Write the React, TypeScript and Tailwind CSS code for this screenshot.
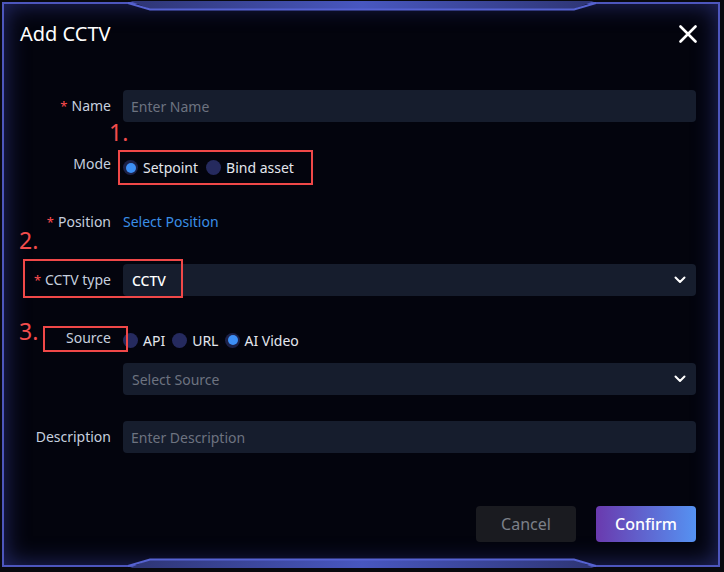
import React from 'react';

const Radio = ({ checked }: { checked?: boolean }) =>
  checked ? (
    <span className="w-[15px] h-[15px] rounded-full bg-[#1c2148] flex items-center justify-center shrink-0">
      <span className="w-[10px] h-[10px] rounded-full bg-[#3d8ff5]" />
    </span>
  ) : (
    <span className="w-[15px] h-[15px] rounded-full bg-[#252a5e] shrink-0" />
  );

const Label = ({ text, req, extra = '' }: { text: string; req?: boolean; extra?: string }) => (
  <div className={`w-[91px] mr-[12px] shrink-0 flex justify-end text-[14px] leading-5 text-[#c6cfdf] ${extra}`}>
    {req && <span className="text-[#ff4d4f] text-[13px] mr-[4px]">*</span>}
    <span>{text}</span>
  </div>
);

const Chevron = () => (
  <svg width="12" height="8" viewBox="0 0 12 8" className="shrink-0">
    <polyline points="1.5,1.5 6,6 10.5,1.5" fill="none" stroke="#ffffff" strokeWidth="2" strokeLinecap="round" strokeLinejoin="round" />
  </svg>
);

export default function App() {
  return (
    <div className="relative w-[724px] h-[572px] overflow-hidden bg-[#08090e] font-['Noto_Sans',sans-serif] pt-[2px] pl-[2px]">
      <div className="relative w-[718px] h-[565px] border-2 border-[#4d56bd] bg-[#03040d] shadow-[inset_0_0_24px_rgba(70,80,200,0.5)] pl-[16px] pr-[22px] pt-[16px] flex flex-col">
        {/* Title */}
        <div className="h-7 flex items-center justify-between">
          <span className="text-[20px] leading-7 text-white">Add CCTV</span>
          <svg width="18" height="18" viewBox="0 0 18 18" className="mr-[-1px]">
            <path d="M1.5 1.5 L16.5 16.5 M16.5 1.5 L1.5 16.5" stroke="#ffffff" strokeWidth="2.6" strokeLinecap="round" />
          </svg>
        </div>

        {/* Name */}
        <div className="mt-[42px] h-8 flex items-center">
          <Label text="Name" req />
          <div className="flex-1 h-8 rounded bg-[#161d2d] flex items-center pl-[8px] text-[14px] text-[#6d7380]">Enter Name</div>
        </div>

        {/* Mode */}
        <div className="mt-[28px] h-[35px] flex items-start">
          <Label text="Mode" extra="pt-[4px]" />
          <div className="ml-[-5px] w-[195px] h-[35px] border-2 border-[#f04848] flex items-center pl-[3px] text-[14px] text-[#e4e7ee]">
            <Radio checked />
            <span className="ml-[5px] mr-[8px]">Setpoint</span>
            <Radio />
            <span className="ml-[5px]">Bind asset</span>
          </div>
        </div>

        {/* Position */}
        <div className="mt-[21px] h-8 flex items-center">
          <Label text="Position" req />
          <span className="text-[14px] leading-5 text-[#3a8ee6]">Select Position</span>
        </div>

        {/* CCTV type */}
        <div className="mt-[26px] h-8 flex items-center">
          <Label text="CCTV type" req />
          <div className="flex-1 h-8 rounded bg-[#161d2d] flex items-center justify-between pl-[9px] pr-[10px] text-[14px] text-white font-medium">
            <span>CCTV</span>
            <Chevron />
          </div>
        </div>

        {/* Source */}
        <div className="mt-[28px] h-8 flex items-center">
          <Label text="Source" extra="pb-[5px]" />
          <div className="flex items-center text-[14px] text-[#e4e7ee]">
            <Radio />
            <span className="ml-[5px] mr-[7px]">API</span>
            <Radio />
            <span className="ml-[5px] mr-[7px]">URL</span>
            <Radio checked />
            <span className="ml-[4px]">AI Video</span>
          </div>
        </div>

        {/* Select Source */}
        <div className="mt-[7px] h-8 flex items-center pl-[103px]">
          <div className="flex-1 h-8 rounded bg-[#161d2d] flex items-center justify-between pl-[9px] pr-[10px] text-[14px] text-[#6d7380]">
            <span>Select Source</span>
            <Chevron />
          </div>
        </div>

        {/* Description */}
        <div className="mt-[26px] h-8 flex items-center">
          <Label text="Description" />
          <div className="flex-1 h-8 rounded bg-[#161d2d] flex items-center pl-[8px] text-[14px] text-[#6d7380]">Enter Description</div>
        </div>

        {/* Buttons */}
        <div className="mt-[53px] h-9 flex justify-end gap-5">
          <button className="w-[100px] h-9 rounded bg-[#1a1b20] text-[16px] text-[#7c8089]">Cancel</button>
          <button className="w-[100px] h-9 rounded bg-[linear-gradient(90deg,#6a3aae,#5592f2)] text-[16px] text-white font-medium">Confirm</button>
        </div>
      </div>

      {/* Frame tabs */}
      <svg className="absolute left-0 top-0 pointer-events-none" width="724" height="572" viewBox="0 0 724 572">
        <defs>
          <linearGradient id="tabg" x1="0" x2="1" y1="0" y2="0">
            <stop offset="0" stopColor="#2e3574" />
            <stop offset="0.5" stopColor="#4857c0" />
            <stop offset="1" stopColor="#2e3574" />
          </linearGradient>
        </defs>
        <polygon points="130,1 594,1 574,9 150,9" fill="url(#tabg)" />
        <polyline points="128,3 150,9.5 574,9.5 596,3" fill="none" stroke="#5663d2" strokeWidth="2" />
        <polygon points="150,559 574,559 594,568 130,568" fill="url(#tabg)" />
        <polyline points="128,566 150,559.5 574,559.5 596,566" fill="none" stroke="#5663d2" strokeWidth="2" />
      </svg>

      {/* Annotations */}
      <span className="absolute left-[109px] top-[121px] text-[23px] leading-none text-[#f24c4c]">1.</span>
      <span className="absolute left-[19px] top-[229px] text-[23px] leading-none text-[#f24c4c]">2.</span>
      <span className="absolute left-[19px] top-[320px] text-[23px] leading-none text-[#f24c4c]">3.</span>
      <div className="absolute left-[23px] top-[259px] w-[160px] h-[39px] border-2 border-[#f04848]" />
      <div className="absolute left-[43px] top-[326px] w-[85px] h-[26px] border-2 border-[#f04848]" />
    </div>
  );
}
